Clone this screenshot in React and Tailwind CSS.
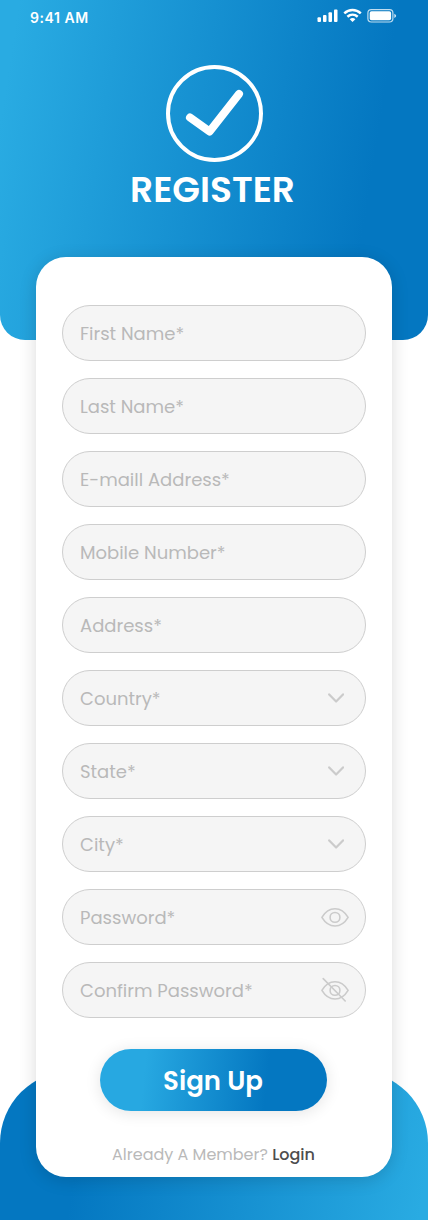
import React from "react";

const fields = [
  { label: "First Name*" },
  { label: "Last Name*" },
  { label: "E-maill Address*" },
  { label: "Mobile Number*" },
  { label: "Address*" },
  { label: "Country*", icon: "chevron" },
  { label: "State*", icon: "chevron" },
  { label: "City*", icon: "chevron" },
  { label: "Password*", icon: "eye" },
  { label: "Confirm Password*", icon: "eye-off" },
];

function Chevron() {
  return (
    <svg className="mr-[5px] h-[10px] w-[16px]" viewBox="0 0 16 10" fill="none" stroke="#cbcbcb" strokeWidth="2.2" strokeLinecap="round" strokeLinejoin="round">
      <path d="M1.2 1.4L8.1 8.5L15 1.4" />
    </svg>
  );
}

function Eye({ off }) {
  return (
    <svg className="h-[26px] w-[28px]" viewBox="0 0 28 26" fill="none" stroke="#cbcbcb" strokeWidth="1.600" strokeLinecap="round" strokeLinejoin="round">
      <path d="M0.9 13.400C4 8.200 8.600 4.800 14 4.800S24 8.200 27.100 13.400C24 18.600 19.400 22 14 22S4 18.600 0.900 13.400Z" />
      <circle cx="14" cy="13.400" r="4.900" />
      {off && <path d="M2.200 1.600L24.200 24" />}
    </svg>
  );
}

function Field({ label, icon }) {
  return (
    <div className="flex h-[56px] items-center justify-between rounded-full border border-[#cecece] bg-[#f5f5f5] pr-[16px] pl-[17px]">
      <span className="text-[18px] leading-[27px] font-normal whitespace-nowrap text-[#b9b9b9]">{label}</span>
      {icon === "chevron" && <Chevron />}
      {icon === "eye" && <Eye />}
      {icon === "eye-off" && <Eye off />}
    </div>
  );
}

function StatusBar() {
  return (
    <div className="flex h-[34px] items-start justify-between pr-[31px] pl-[30px] text-white">
      <span className="pt-[8px] text-[14px] leading-[19px] font-semibold tracking-[0.55px] [font-family:Inter,sans-serif]">9:41 AM</span>
      <svg className="mt-[8px] h-[15px] w-[80px]" viewBox="317 8 80 15" fill="white">
        <rect x="317.500" y="17.300" width="3.500" height="4.700" rx="0.900" />
        <rect x="323" y="15" width="3.500" height="7" rx="0.900" />
        <rect x="328.500" y="12.300" width="3.500" height="9.700" rx="0.900" />
        <rect x="334" y="9.500" width="3.500" height="12.500" rx="0.900" />
        <g fill="none" stroke="white" strokeWidth="2.500">
          <path d="M344.300 13.300C349 8.900 356 8.900 360.800 13.300" />
          <path d="M347.400 16.700C350.400 14 354.700 14 357.700 16.700" />
        </g>
        <path d="M352.550 22L349.700 19.200C351.300 17.700 353.800 17.700 355.400 19.200Z" />
        <rect x="367.900" y="9.600" width="25" height="12.400" rx="3.400" fill="none" stroke="white" strokeOpacity="0.750" strokeWidth="1.200" />
        <rect x="369.700" y="11.300" width="21.400" height="9" rx="1.800" />
        <path d="M394.300 13.700C396.700 14.500 396.700 17.100 394.300 17.900Z" fillOpacity="0.800" />
      </svg>
    </div>
  );
}

export default function App() {
  return (
    <div className="flex h-[1220px] w-[428px] flex-col overflow-hidden bg-white [font-family:Poppins,Inter,sans-serif]">
      <header className="h-[340px] shrink-0 rounded-b-[25px] bg-[linear-gradient(99deg,#29abe2_4%,#0477c1_83%)]">
        <StatusBar />
        <div className="mt-[31px] flex flex-col items-center">
          <svg className="h-[97px] w-[97px]" viewBox="0 0 97 97" fill="none" stroke="white" strokeLinecap="round" strokeLinejoin="round">
            <circle cx="48.500" cy="48.500" r="46.500" strokeWidth="4" />
            <path d="M24 52.500L43.600 66.500L73 29" strokeWidth="8" />
          </svg>
          <h1 className="mt-[3px] mr-[3px] text-[36px] leading-[50px] font-semibold whitespace-nowrap text-white">REGISTER</h1>
        </div>
      </header>

      <main className="relative z-10 mx-[36px] -mt-[83px] flex h-[920px] shrink-0 flex-col rounded-[30px] bg-white px-[26px] pt-[48px] shadow-[0_3px_17px_rgba(0,0,0,0.150)]">
        <form className="flex flex-col gap-[17px]">
          {fields.map((field) => (
            <Field key={field.label} {...field} />
          ))}
        </form>
        <button className="mt-[31px] ml-[38px] flex h-[62px] w-[227px] items-center justify-center rounded-full bg-[linear-gradient(96deg,#27a8e1_20%,#0477c1_73%)] pt-[2px] pr-px text-[26px] font-semibold text-white shadow-[0_2px_16px_rgba(0,0,0,0.110)]">
          Sign Up
        </button>
        <p className="mt-[32px] pr-px text-center text-[16px] leading-[24px] font-normal whitespace-nowrap text-[#b9b9b9]">
          Already A Member? <a className="font-medium text-[#4d4d4d]">Login</a>
        </p>
      </main>

      <footer className="-mt-[106px] h-[149px] shrink-0 rounded-t-[72px] bg-[linear-gradient(99deg,#0477c1_20%,#29abe2_98%)]" />
    </div>
  );
}
